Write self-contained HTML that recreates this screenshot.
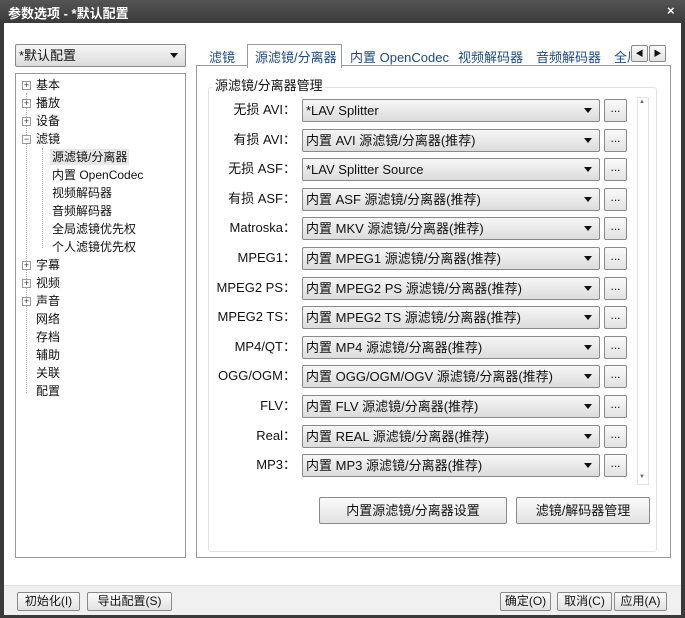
<html><head><style>
body{margin:0;width:685px;height:618px;overflow:hidden;background:#3a3a3a;font-family:"Liberation Sans","Noto Sans CJK SC",sans-serif;font-size:12px;color:#111}
.a{position:absolute}
#win{position:absolute;left:4px;top:23px;width:677px;height:591px;background:#fff}
.cb{position:absolute;height:21px;border:1px solid #8a8a8a;border-radius:2px;background:linear-gradient(#f6f6f6,#dcdcdc);box-sizing:border-box;line-height:19px;padding-left:3px;white-space:nowrap}
.cb:after{content:"";position:absolute;right:7px;top:8px;border-left:4px solid transparent;border-right:4px solid transparent;border-top:5px solid #111}
.bt{position:absolute;border:1px solid #8a8a8a;border-radius:2px;background:linear-gradient(#fafafa,#e2e2e2);box-sizing:border-box;text-align:center;white-space:nowrap}
.lb{position:absolute;width:92px;text-align:right;left:204px;white-space:nowrap}
.ti{position:absolute;left:36px;line-height:16px}
.tc{position:absolute;left:52px;line-height:16px}
.pl{position:absolute;left:22px;width:7px;height:7px;border:1px solid #999;background:#fff;font-size:9px;line-height:7px;text-align:center;color:#333}
.tab{position:absolute;top:47px;color:#1d4a80;font-size:13px;white-space:nowrap}
</style></head><body>
<div class="a" style="left:0;top:0;width:685px;height:23px;background:linear-gradient(#555,#3a3a3a)"></div>
<div class="a" style="left:8px;top:3px;color:#fff;font-size:13px;font-weight:bold">参数选项 - *默认配置</div>
<div class="a" style="left:667px;top:3px;color:#fff;font-size:13px;font-weight:bold">×</div>
<div id="win"></div>
<div class="cb" style="left:15px;top:44px;width:171px;height:23px;line-height:21px;font-size:13px">*默认配置</div>
<div class="a" style="left:15px;top:73px;width:169px;height:483px;border:1px solid #999;background:#fff"></div>
<div class="a" style="left:26px;top:93px;height:300px;border-left:1px dotted #aaa"></div>
<div class="a" style="left:42px;top:148px;height:100px;border-left:1px dotted #aaa"></div>
<div class="pl" style="top:81px">+</div><div class="ti" style="top:77px">基本</div>
<div class="pl" style="top:99px">+</div><div class="ti" style="top:95px">播放</div>
<div class="pl" style="top:117px">+</div><div class="ti" style="top:113px">设备</div>
<div class="pl" style="top:135px">−</div><div class="ti" style="top:131px">滤镜</div>
<div class="tc" style="top:149px;background:#e8e8e8;padding:0 2px;left:50px">源滤镜/分离器</div>
<div class="tc" style="top:167px">内置 OpenCodec</div>
<div class="tc" style="top:185px">视频解码器</div>
<div class="tc" style="top:203px">音频解码器</div>
<div class="tc" style="top:221px">全局滤镜优先权</div>
<div class="tc" style="top:239px">个人滤镜优先权</div>
<div class="pl" style="top:261px">+</div><div class="ti" style="top:257px">字幕</div>
<div class="pl" style="top:279px">+</div><div class="ti" style="top:275px">视频</div>
<div class="pl" style="top:297px">+</div><div class="ti" style="top:293px">声音</div>
<div class="ti" style="top:311px">网络</div><div class="ti" style="top:329px">存档</div><div class="ti" style="top:347px">辅助</div><div class="ti" style="top:365px">关联</div><div class="ti" style="top:383px">配置</div>
<div class="a" style="left:196px;top:65px;width:473px;height:491px;border:1px solid #999;background:#fff"></div>
<div class="a" style="left:247px;top:44px;width:93px;height:23px;border:1px solid #999;border-bottom:none;background:#fff"></div>
<div class="tab" style="left:209px">滤镜</div>
<div class="tab" style="left:255px">源滤镜/分离器</div>
<div class="tab" style="left:350px">内置 OpenCodec</div>
<div class="tab" style="left:458px">视频解码器</div>
<div class="tab" style="left:536px">音频解码器</div>
<div class="tab" style="left:614px;width:16px;height:18px;overflow:hidden">全局</div>
<div class="bt" style="left:631px;top:45px;width:17px;height:17px;font-size:8px;line-height:15px">◀</div>
<div class="bt" style="left:649px;top:45px;width:17px;height:17px;font-size:8px;line-height:15px">▶</div>
<div class="a" style="left:208px;top:87px;width:447px;height:463px;border:1px solid #dde3ea;border-radius:3px"></div>
<div class="a" style="left:213px;top:75px;background:#fff;padding:0 2px;font-size:13px">源滤镜/分离器管理</div>
<div class="a" style="left:637px;top:97px;width:10px;height:386px;border:1px solid #e2e2e2"></div>
<div class="a" style="left:639px;top:99px;font-size:6px;color:#666">▲</div>
<div class="a" style="left:639px;top:474px;font-size:6px;color:#666">▼</div>
<div id="rows"></div>
<script>
var r=[["无损 AVI：","*LAV Splitter"],["有损 AVI：","内置 AVI 源滤镜/分离器(推荐)"],["无损 ASF：","*LAV Splitter Source"],["有损 ASF：","内置 ASF 源滤镜/分离器(推荐)"],["Matroska：","内置 MKV 源滤镜/分离器(推荐)"],["MPEG1：","内置 MPEG1 源滤镜/分离器(推荐)"],["MPEG2 PS：","内置 MPEG2 PS 源滤镜/分离器(推荐)"],["MPEG2 TS：","内置 MPEG2 TS 源滤镜/分离器(推荐)"],["MP4/QT：","内置 MP4 源滤镜/分离器(推荐)"],["OGG/OGM：","内置 OGG/OGM/OGV 源滤镜/分离器(推荐)"],["FLV：","内置 FLV 源滤镜/分离器(推荐)"],["Real：","内置 REAL 源滤镜/分离器(推荐)"],["MP3：","内置 MP3 源滤镜/分离器(推荐)"]];
var h="";r.forEach(function(x,i){var c=110+i*29.6;h+='<div class="lb" style="top:'+(c-8)+'px;font-size:13px;line-height:16px">'+x[0]+'</div><div class="cb" style="left:302px;top:'+(c-11)+'px;width:298px;height:23px;line-height:21px;font-size:13px">'+x[1]+'</div><div class="bt" style="left:604px;top:'+(c-11)+'px;width:23px;height:23px;line-height:17px">...</div>'});document.getElementById("rows").innerHTML=h;
</script>
<div class="bt" style="left:319px;top:497px;width:188px;height:27px;line-height:25px;font-size:13px">内置源滤镜/分离器设置</div>
<div class="bt" style="left:516px;top:497px;width:134px;height:27px;line-height:25px;font-size:13px">滤镜/解码器管理</div>
<div class="a" style="left:4px;top:585px;width:677px;height:29px;background:#f0f0f0;border-top:1px solid #ddd"></div>
<div class="bt" style="left:17px;top:592px;width:63px;height:19px;line-height:17px">初始化(I)</div>
<div class="bt" style="left:87px;top:592px;width:85px;height:19px;line-height:17px">导出配置(S)</div>
<div class="bt" style="left:500px;top:592px;width:51px;height:19px;line-height:17px">确定(O)</div>
<div class="bt" style="left:557px;top:592px;width:55px;height:19px;line-height:17px">取消(C)</div>
<div class="bt" style="left:614px;top:592px;width:53px;height:19px;line-height:17px">应用(A)</div>
</body></html>
